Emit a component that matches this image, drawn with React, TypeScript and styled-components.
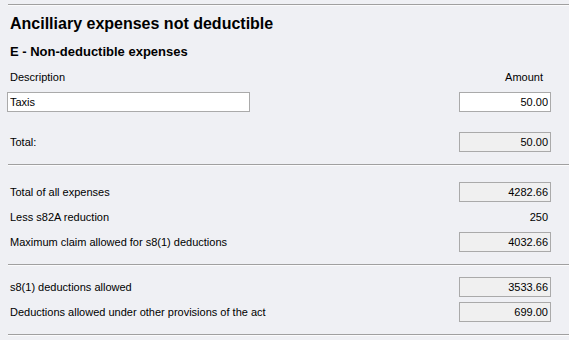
import React from "react";
import styled, { createGlobalStyle } from "styled-components";

const GlobalStyle = createGlobalStyle`
    html, body {
        margin: 0;
        padding: 0;
        background-color: #eff0f4;
    }

    body {
        font-family: "Liberation Sans", Arial, sans-serif;
        color: #000;
    }
`;

type Line = { label: string; value: string; plain?: boolean };

const summary: Line[] = [
    { label: "Total of all expenses", value: "4282.66" },
    { label: "Less s82A reduction", value: "250", plain: true },
    { label: "Maximum claim allowed for s8(1) deductions", value: "4032.66" },
];

const deductions: Line[] = [
    { label: "s8(1) deductions allowed", value: "3533.66" },
    { label: "Deductions allowed under other provisions of the act", value: "699.00" },
];

function App() {
    return (
        <Page>
            <GlobalStyle />
            <Divider />
            <Section $top={0} >
                <Title>Ancilliary expenses not deductible</Title>
                <Subtitle>E - Non-deductible expenses</Subtitle>
                <HeaderRow>
                    <ColumnLabel>Description</ColumnLabel>
                    <ColumnLabel $right>Amount</ColumnLabel>
                </HeaderRow>
                <Row>
                    <TextField defaultValue="Taxis" />
                    <NumberField defaultValue="50.00" />
                </Row>
                <TotalRow>
                    <Label>Total:</Label>
                    <ReadOnlyField>50.00</ReadOnlyField>
                </TotalRow>
            </Section>
            <Divider />
            <Section $top={17}>
                {summary.map((line) => (
                    <Row key={line.label}>
                        <Label>{line.label}</Label>
                        {line.plain ? (
                            <PlainValue>{line.value}</PlainValue>
                        ) : (
                            <ReadOnlyField>{line.value}</ReadOnlyField>
                        )}
                    </Row>
                ))}
            </Section>
            <Divider />
            <Section $top={12}>
                {deductions.map((line) => (
                    <Row key={line.label}>
                        <Label>{line.label}</Label>
                        <ReadOnlyField>{line.value}</ReadOnlyField>
                    </Row>
                ))}
            </Section>
            <Divider />
        </Page>
    );
}

const Page = styled.div`
    width: 569px;
    height: 340px;
    box-sizing: border-box;
    padding: 4px 0 0 7px;
    background-color: #eff0f4;
    overflow: hidden;
`;

const Divider = styled.hr`
    margin: 0 0 0 1px;
    height: 1px;
    border: none;
    background-color: #a0a0a0;
    box-shadow: 0 1px 0 #fbfbfc;
`;

const Section = styled.section<{ $top: number }>`
    display: grid;
    row-gap: 5px;
    padding: ${(p) => p.$top}px 0 12px 0;
`;

const Title = styled.h1`
    margin: 10px 0 0 3px;
    font-size: 16px;
    line-height: 18px;
    font-weight: bold;
`;

const Subtitle = styled.h2`
    margin: 6px 0 0 3px;
    font-size: 13px;
    line-height: 16px;
    font-weight: bold;
`;

const Row = styled.div`
    display: grid;
    grid-template-columns: 1fr 92px;
    align-items: center;
    height: 20px;
    padding-right: 18px;
`;

const HeaderRow = styled(Row)`
    height: 13px;
    margin-top: 6px;
    margin-bottom: 3px;
`;

const TotalRow = styled(Row)`
    margin-top: 15px;
`;

const ColumnLabel = styled.span<{ $right?: boolean }>`
    font-size: 11px;
    line-height: 13px;
    padding: ${(p) => (p.$right ? "0 8px 0 0" : "0 0 0 3px")};
    text-align: ${(p) => (p.$right ? "right" : "left")};
`;

const Label = styled.span`
    font-size: 11px;
    line-height: 13px;
    padding-left: 3px;
`;

const fieldBase = `
    box-sizing: border-box;
    height: 20px;
    margin: 0;
    padding: 0 2px;
    border: 1px solid #aaaaaa;
    font-family: "Liberation Sans", Arial, sans-serif;
    font-size: 11px;
    line-height: 18px;
    color: #000;
    outline: none;
`;

const TextField = styled.input`
    ${fieldBase}
    width: 243px;
    background-color: #fff;
`;

const NumberField = styled.input`
    ${fieldBase}
    width: 92px;
    background-color: #fff;
    text-align: right;
`;

const ReadOnlyField = styled.div`
    ${fieldBase}
    width: 92px;
    background-color: #f0f0f0;
    text-align: right;
`;

const PlainValue = styled.span`
    font-size: 11px;
    line-height: 13px;
    text-align: right;
    padding-right: 3px;
`;

export default App;
